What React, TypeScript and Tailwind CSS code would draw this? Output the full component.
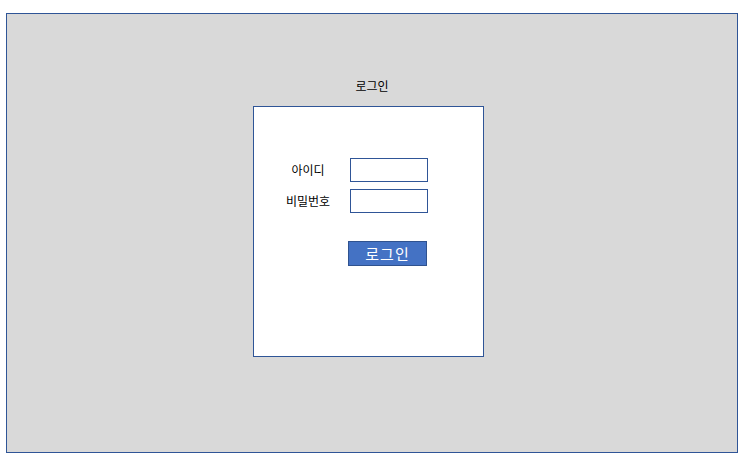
import React from 'react';

export default function App() {
  return (
    <div className="w-[752px] h-[462px] bg-white pt-[13px] pl-[6px] font-['Noto_Sans_CJK_KR',sans-serif]">
      <div className="w-[732px] h-[440px] border border-[#2f5597] bg-[#d9d9d9] flex flex-col">
        <div className="mt-[64px] h-[16px] text-[12px] leading-[16px] text-black text-center">로그인</div>
        <div className="mt-[12px] ml-[246px] w-[231px] h-[251px] border border-[#2f5597] bg-white flex flex-col">
          <div className="mt-[51px] flex flex-col gap-[7px]">
            <Row label="아이디" />
            <Row label="비밀번호" />
          </div>
          <button className="mt-[28px] ml-[94px] w-[79px] h-[25px] border border-[#2f528f] bg-[#4472c4] text-white text-[15px] leading-[23px] tracking-[1px]">
            로그인
          </button>
        </div>
      </div>
    </div>
  );
}

function Row({ label }: { label: string }) {
  return (
    <div className="flex items-center">
      <span className="ml-[20px] w-[68px] text-center text-[12px] text-black leading-[16px]">{label}</span>
      <input className="ml-[8px] w-[78px] h-[24px] border border-[#2f5597] bg-white outline-none" />
    </div>
  );
}
